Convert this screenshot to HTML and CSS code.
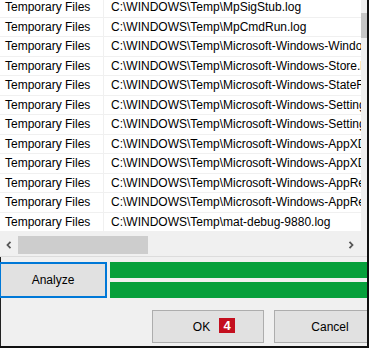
FILE: index.html
```html
<!DOCTYPE html>
<html lang="en">
  <head>
    <meta charset="UTF-8" />
    <meta name="viewport" content="width=device-width, initial-scale=1.0" />
    <title>Disk Cleanup - Temporary Files</title>
    <link rel="stylesheet" href="styles.css">
  </head>
  <body>
    <div class="window">
      <div class="list">
        <div class="rows">
          <div class="row"><span class="cat">Temporary Files</span><span class="path">C:\WINDOWS\Temp\MpSigStub.log</span></div>
          <div class="row"><span class="cat">Temporary Files</span><span class="path">C:\WINDOWS\Temp\MpCmdRun.log</span></div>
          <div class="row"><span class="cat">Temporary Files</span><span class="path">C:\WINDOWS\Temp\Microsoft-Windows-WindowsUpdateClient.log</span></div>
          <div class="row"><span class="cat">Temporary Files</span><span class="path">C:\WINDOWS\Temp\Microsoft-Windows-Store.log</span></div>
          <div class="row"><span class="cat">Temporary Files</span><span class="path">C:\WINDOWS\Temp\Microsoft-Windows-StateRepository.log</span></div>
          <div class="row"><span class="cat">Temporary Files</span><span class="path">C:\WINDOWS\Temp\Microsoft-Windows-SettingSync.log</span></div>
          <div class="row"><span class="cat">Temporary Files</span><span class="path">C:\WINDOWS\Temp\Microsoft-Windows-SettingSync-Core.log</span></div>
          <div class="row"><span class="cat">Temporary Files</span><span class="path">C:\WINDOWS\Temp\Microsoft-Windows-AppXDeployment.log</span></div>
          <div class="row"><span class="cat">Temporary Files</span><span class="path">C:\WINDOWS\Temp\Microsoft-Windows-AppXDeploymentServer.log</span></div>
          <div class="row"><span class="cat">Temporary Files</span><span class="path">C:\WINDOWS\Temp\Microsoft-Windows-AppReadiness.log</span></div>
          <div class="row"><span class="cat">Temporary Files</span><span class="path">C:\WINDOWS\Temp\Microsoft-Windows-AppReadiness-Admin.log</span></div>
          <div class="row"><span class="cat">Temporary Files</span><span class="path">C:\WINDOWS\Temp\mat-debug-9880.log</span></div>
        </div>
        <div class="vscroll">
          <div class="vthumb"></div>
        </div>
      </div>
      <div class="hscroll">
        <div class="htrack">
          <span class="arrow">
            <svg width="6" height="8" viewBox="0 0 6 8"><path d="M4.5 0.8 L1.5 4 L4.5 7.2" fill="none" stroke="#555" stroke-width="1.8"/></svg>
          </span>
          <div class="hthumb"></div>
          <span class="arrow arrow-right">
            <svg width="6" height="8" viewBox="0 0 6 8"><path d="M1.5 0.8 L4.5 4 L1.5 7.2" fill="none" stroke="#555" stroke-width="1.8"/></svg>
          </span>
        </div>
        <div class="corner"></div>
      </div>
      <div class="controls">
        <div class="analyze-row">
          <button class="btn btn-analyze">Analyze</button>
          <div class="bars">
            <div class="bar"></div>
            <div class="bar"></div>
          </div>
        </div>
        <div class="actions">
          <button class="btn btn-ok"><span class="ok-label">OK</span><span class="badge">4</span></button>
          <button class="btn btn-cancel">Cancel</button>
        </div>
      </div>
    </div>
  </body>
</html>
```

FILE: styles.css
```css
html {
  background-color: #ffffff;
}

body {
  margin: 0;
  padding: 0;
  font-family: "Liberation Sans", Arial, sans-serif;
  font-size: 12px;
  color: #000000;
}

.window {
  width: 369px;
  height: 348px;
  box-sizing: border-box;
  border-right: 2px solid #111111;
  border-bottom: 2px solid #111111;
  background-color: #f0f0f0;
  overflow: hidden;
}

.list {
  display: flex;
  height: 232px;
  overflow: hidden;
}

.rows {
  width: 361px;
  margin-top: -2px;
  background-color: #ffffff;
  overflow: hidden;
}

.row {
  display: flex;
  height: 19.5px;
  line-height: 19.5px;
  box-sizing: border-box;
  border-bottom: 1px solid #f0f0f0;
  white-space: nowrap;
}

.cat {
  width: 104px;
  flex-shrink: 0;
  padding-left: 5px;
  box-sizing: border-box;
  border-right: 1px solid #f0f0f0;
}

.path {
  padding-left: 7px;
}

.vscroll {
  width: 6px;
  background-color: #f0f0f0;
  padding-top: 13px;
}

.vthumb {
  height: 25px;
  background-color: #c6c6c6;
}

.hscroll {
  display: flex;
  height: 24px;
  border-bottom: 1px solid #dcdcdc;
}

.htrack {
  width: 361px;
  display: flex;
  align-items: center;
}

.arrow {
  width: 18px;
  display: flex;
  justify-content: center;
  align-items: center;
  margin-top: 1px;
}

.arrow-right {
  margin-left: auto;
  margin-right: 1px;
}

.hthumb {
  width: 130px;
  height: 18px;
  margin-top: 1px;
  background-color: #cdcdcd;
}

.corner {
  flex: 1;
}

.controls {
  border-left: 1px solid #222222;
  height: 91px;
}

.analyze-row {
  display: flex;
  padding-top: 5px;
  height: 36px;
}

.btn {
  font-family: "Liberation Sans", Arial, sans-serif;
  font-size: 12px;
  color: #000000;
  background-color: #e1e1e1;
  border: 1px solid #adadad;
  padding: 0;
  box-sizing: border-box;
}

.btn-analyze {
  width: 108px;
  height: 36px;
  margin-left: -2px;
  border: 2px solid #0078d7;
}

.bars {
  flex: 1;
  margin-left: 3px;
  display: flex;
  flex-direction: column;
  justify-content: space-between;
}

.bar {
  height: 16px;
  background-color: #06a03b;
}

.actions {
  display: flex;
  gap: 10px;
  margin-top: 12px;
  margin-left: 151px;
}

.btn-ok,
.btn-cancel {
  width: 112px;
  height: 33px;
  flex-shrink: 0;
}

.btn-ok {
  position: relative;
  padding-right: 13px;
}

.badge {
  position: absolute;
  left: 66px;
  top: 7px;
  width: 16px;
  height: 15px;
  line-height: 15px;
  background-color: #c40f1f;
  color: #ffffff;
  font-weight: bold;
  font-size: 13px;
  text-align: center;
}
```
